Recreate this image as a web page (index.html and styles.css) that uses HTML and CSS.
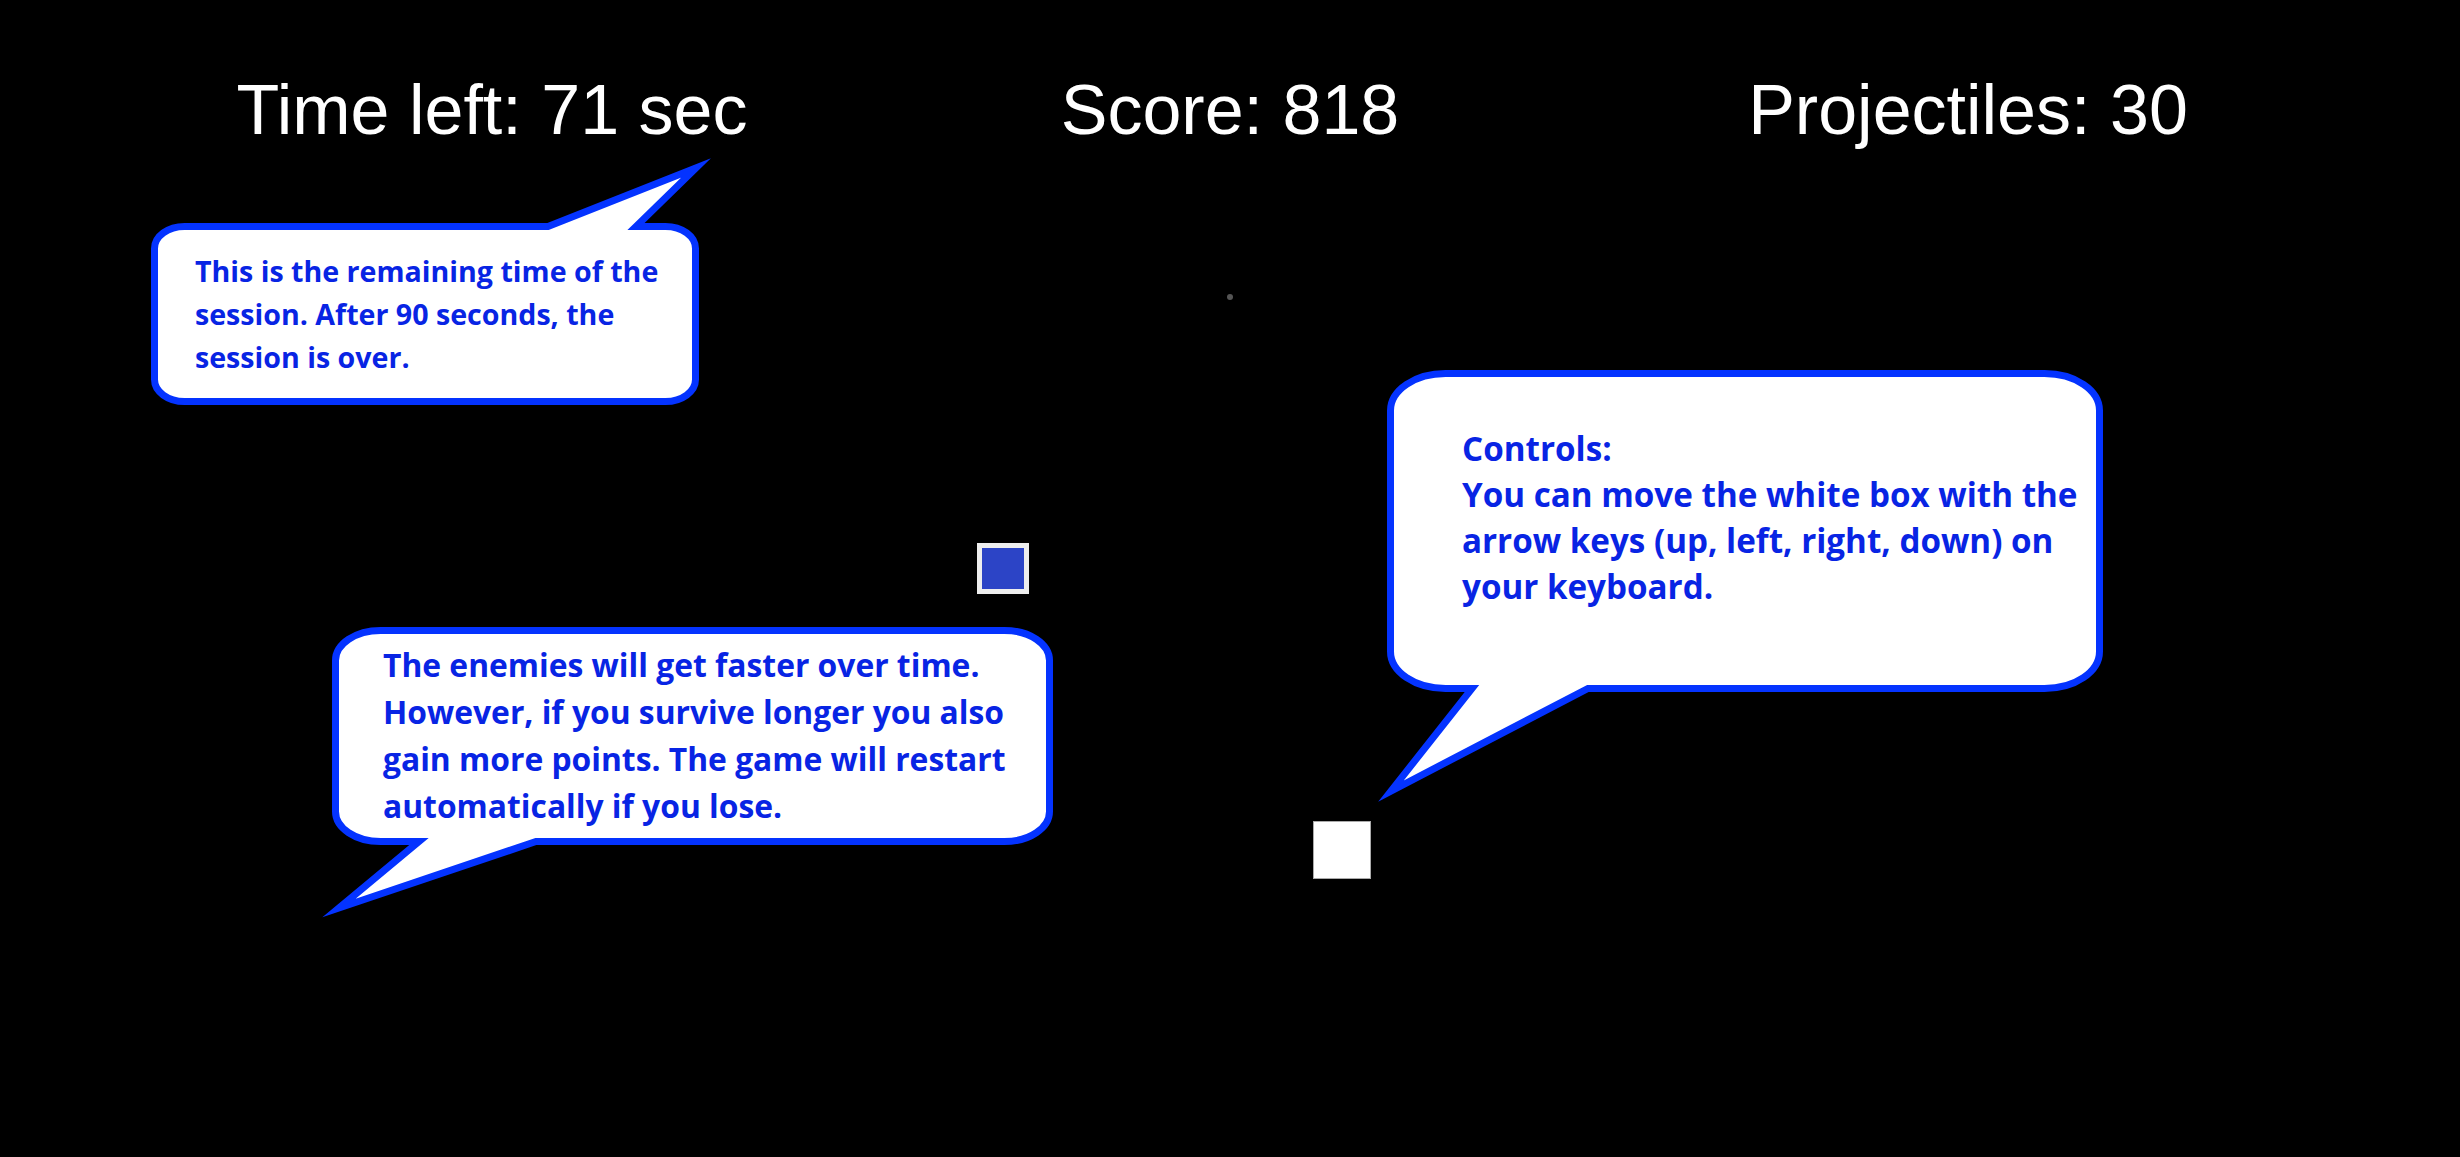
FILE: index.html
```html
<!DOCTYPE html>
<html lang="en">
<head>
  <meta charset="UTF-8" />
  <title>Dodge - Tutorial</title>
  <link rel="stylesheet" href="styles.css">
</head>
<body>
  <div class="stage">
    <div class="hud">
      <div class="hud-item">Time left: <span id="timeLeft">71</span> sec</div>
      <div class="hud-item">Score: <span id="score">818</span></div>
      <div class="hud-item">Projectiles: <span id="projectiles">30</span></div>
    </div>

    <!-- game objects -->
    <div class="shot"></div>
    <div class="enemy"></div>
    <div class="player"></div>

    <!-- tutorial bubbles -->
    <div class="bubble bubble-time">
      <svg class="bubble-shape" viewBox="0 0 580 262">
        <path d="M44.5 76.5 H408 L556 18 L496 76.5 H525.5 A30 22 0 0 1 555.5 98.5 V229.5 A30 22 0 0 1 525.5 251.5 H44.5 A30 22 0 0 1 14.5 229.5 V98.5 A30 22 0 0 1 44.5 76.5 Z" />
      </svg>
      <p class="bubble-text">This is the remaining time of the<br>session. After 90 seconds, the<br>session is over.</p>
    </div>

    <div class="bubble bubble-controls">
      <svg class="bubble-shape" viewBox="0 0 745 450">
        <path d="M75.5 13.5 H674.5 A55 37 0 0 1 729.5 50.5 V291.5 A55 37 0 0 1 674.5 328.5 H218 L21 431 L102 328.5 H75.5 A55 37 0 0 1 20.5 291.5 V50.5 A55 37 0 0 1 75.5 13.5 Z" />
      </svg>
      <p class="bubble-text">Controls:<br>You can move the white box with the<br>arrow keys (up, left, right, down) on<br>your keyboard.</p>
    </div>

    <div class="bubble bubble-enemies">
      <svg class="bubble-shape" viewBox="0 0 760 315">
        <path d="M70.5 15.5 H694.5 A45 30 0 0 1 739.5 45.5 V196.5 A45 30 0 0 1 694.5 226.5 H226 L29 293 L109 226.5 H70.5 A45 30 0 0 1 25.5 196.5 V45.5 A45 30 0 0 1 70.5 15.5 Z" />
      </svg>
      <p class="bubble-text">The enemies will get faster over time.<br>However, if you survive longer you also<br>gain more points. The game will restart<br>automatically if you lose.</p>
    </div>
  </div>
</body>
</html>
```

FILE: styles.css
```css
body {
  margin: 0;
  background: #000;
  font-family: "Liberation Sans", Arial, sans-serif;
}
.stage {
  position: relative;
  height: 1157px;
  overflow: hidden;
}
.hud {
  display: flex;
  width: 90%;
  margin: 0 auto;
  padding-top: 70px;
}
.hud-item {
  flex: 1;
  text-align: center;
  color: #fff;
  font-size: 70px;
  line-height: 80px;
}

.shot {
  position: absolute;
  left: 1227px;
  top: 294px;
  width: 6px;
  height: 6px;
  border-radius: 50%;
  background: #555;
}
.enemy {
  position: absolute;
  left: 977px;
  top: 543px;
  width: 52px;
  height: 51px;
  box-sizing: border-box;
  border: 5px solid #eee;
  background: #2c44c6;
}
.player {
  position: absolute;
  left: 1313px;
  top: 821px;
  width: 58px;
  height: 58px;
  box-sizing: border-box;
  border: 1px solid #aaa;
  background: #fff;
}

.bubble {
  position: absolute;
}
.bubble-shape {
  position: absolute;
  left: 0;
  top: 0;
  width: 100%;
  height: 100%;
}
.bubble-shape path {
  fill: #fff;
  stroke: #0433ff;
  stroke-width: 7;
  stroke-miterlimit: 10;
}
.bubble-text {
  position: relative;
  margin: 0;
  color: #0824e4;
  font-family: "Open Sans", Lato, sans-serif;
  font-weight: bold;
  font-size: 28.6px;
  white-space: nowrap;
}
.bubble-time {
  left: 140px;
  top: 150px;
  width: 580px;
  height: 262px;
}
.bubble-time .bubble-text {
  padding: 99px 0 0 55px;
  line-height: 43px;
}
.bubble-controls {
  left: 1370px;
  top: 360px;
  width: 745px;
  height: 450px;
}
.bubble-controls .bubble-text {
  padding: 66px 0 0 92px;
  font-size: 33.2px;
  line-height: 46px;
}
.bubble-enemies {
  left: 310px;
  top: 615px;
  width: 760px;
  height: 315px;
}
.bubble-enemies .bubble-text {
  padding: 26px 0 0 73px;
  font-size: 31.8px;
  line-height: 47px;
}
```
